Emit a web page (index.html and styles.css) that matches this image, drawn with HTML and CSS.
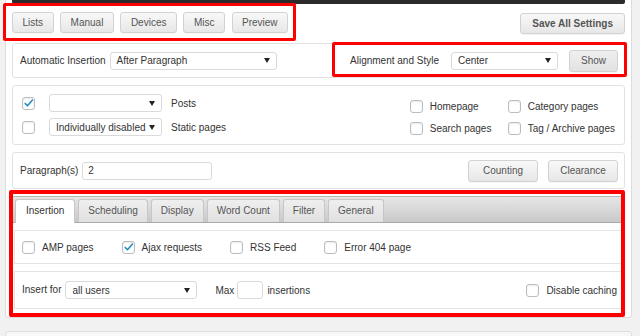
FILE: index.html
```html
<!DOCTYPE html>
<html>
<head>
<meta charset="utf-8">
<link rel="stylesheet" href="styles.css">
</head>
<body>
<div class="wrap">
  <div class="darkbar"></div>
  <div class="toolbar">
    <div class="btn-group">
      <button class="btn">Lists</button>
      <button class="btn">Manual</button>
      <button class="btn">Devices</button>
      <button class="btn">Misc</button>
      <button class="btn">Preview</button>
    </div>
    <button class="btn btn-save">Save All Settings</button>
  </div>

  <div class="panel panel-insertion">
    <div class="field">
      <span class="label">Automatic Insertion</span>
      <div class="select sel-auto"><span>After Paragraph</span><i class="arrow"></i></div>
    </div>
    <div class="field field-align">
      <span class="label">Alignment and Style</span>
      <div class="select sel-align"><span>Center</span><i class="arrow"></i></div>
      <button class="btn btn-show">Show</button>
    </div>
  </div>

  <div class="panel panel-pages">
    <div class="rows-left">
      <div class="row">
        <span class="cb"><svg viewBox="0 0 13 13" class="tick"><path d="M2.6 6.4 L5.3 9.2 L11.2 2.4"/></svg></span>
        <div class="select sel-small"><span></span><i class="arrow"></i></div>
        <span class="label">Posts</span>
      </div>
      <div class="row">
        <span class="cb"></span>
        <div class="select sel-small"><span>Individually disabled</span><i class="arrow"></i></div>
        <span class="label">Static pages</span>
      </div>
    </div>
    <div class="grid-right">
      <label class="check"><span class="cb"></span>Homepage</label>
      <label class="check"><span class="cb"></span>Category pages</label>
      <label class="check"><span class="cb"></span>Search pages</label>
      <label class="check"><span class="cb"></span>Tag / Archive pages</label>
    </div>
  </div>

  <div class="panel panel-para">
    <div class="field">
      <span class="label">Paragraph(s)</span>
      <div class="input in-para">2</div>
    </div>
    <div class="field field-btns">
      <button class="btn btn-wide">Counting</button>
      <button class="btn btn-wide">Clearance</button>
    </div>
  </div>

  <div class="tabs">
    <div class="tab-head">
      <span class="tab active">Insertion</span>
      <span class="tab">Scheduling</span>
      <span class="tab">Display</span>
      <span class="tab">Word Count</span>
      <span class="tab">Filter</span>
      <span class="tab">General</span>
    </div>
    <div class="tab-body">
      <div class="box box-checks">
        <label class="check"><span class="cb"></span>AMP pages</label>
        <label class="check"><span class="cb"><svg viewBox="0 0 13 13" class="tick"><path d="M2.6 6.4 L5.3 9.2 L11.2 2.4"/></svg></span>Ajax requests</label>
        <label class="check"><span class="cb"></span>RSS Feed</label>
        <label class="check"><span class="cb"></span>Error 404 page</label>
      </div>
      <div class="box box-insert">
        <div class="field">
          <span class="label label-up">Insert for</span>
          <div class="select sel-users"><span>all users</span><i class="arrow"></i></div>
          <span class="label label-max">Max</span>
          <div class="input in-max"></div>
          <span class="label">insertions</span>
        </div>
        <label class="check"><span class="cb"></span>Disable caching</label>
      </div>
    </div>
  </div>
</div>
<div class="next"></div>

<div class="mark mark-1"></div>
<div class="mark mark-2"></div>
<div class="mark mark-3"></div>
</body>
</html>
```

FILE: styles.css
```css
* { box-sizing: border-box; }
html, body { margin: 0; padding: 0; }
body {
  background: #f1f1f1;
  font-family: "Liberation Sans", Arial, sans-serif;
  font-size: 10px;
  color: #333;
  width: 640px;
  height: 336px;
  overflow: hidden;
  position: relative;
}
.wrap {
  margin-left: 5px;
  width: 627px;
  background: #fff;
  border: 1px solid #dcdcdc;
  border-top: none;
  border-radius: 0 0 4px 4px;
  padding: 0 6px 2px 6px;
}
.darkbar {
  height: 4px;
  background: #2b2b2b;
  border-radius: 0 0 2px 2px;
}
.toolbar {
  margin-top: 8px;
  display: flex;
  justify-content: space-between;
  align-items: flex-start;
}
.btn-group { display: flex; gap: 6.5px; }
.btn {
  font-family: inherit;
  font-size: 10px;
  color: #555;
  height: 21px;
  padding: 0 9.5px;
  background: linear-gradient(#f8f8f8, #e7e7e7);
  border: 1px solid #d2d2d2;
  border-radius: 3px;
  box-shadow: 0 1px 0 rgba(0,0,0,0.04);
  line-height: 19px;
  margin: 0;
}
.btn-save {
  font-weight: bold;
  height: 21px;
  margin-top: 1px;
  padding: 0 11px;
}
.panel {
  border: 1px solid #e2e2e2;
  border-radius: 3px;
  display: flex;
  justify-content: space-between;
}
.panel-insertion {
  margin-top: 9px;
  height: 35px;
  align-items: center;
  padding: 0 6px 0 7px;
}
.field { display: flex; align-items: center; }
.label { color: #333; white-space: nowrap; }
.select {
  display: flex;
  align-items: center;
  justify-content: space-between;
  height: 18px;
  border: 1px solid #dadada;
  border-radius: 3px;
  background: #fff;
  padding: 0 6px 0 6px;
  color: #333;
  white-space: nowrap;
}
.arrow {
  width: 0; height: 0;
  border-left: 3px solid transparent;
  border-right: 3px solid transparent;
  border-top: 5px solid #222;
  flex: none;
}
.sel-auto { width: 167px; margin-left: 4px; }
.field-align .sel-align { width: 107px; margin-left: 12px; height: 18px; }
.btn-show {
  margin-left: 11px;
  height: 22px;
  width: 49px;
  padding: 0;
  background: linear-gradient(#efefef, #e2e2e2);
}

.panel-pages {
  margin-top: 7px;
  height: 60px;
  padding: 8px 9px 0 9px;
  align-items: flex-start;
}
.rows-left { display: flex; flex-direction: column; gap: 6px; }
.row { display: flex; align-items: center; }
.row .cb { margin-right: 14px; }
.sel-small { width: 113px; padding-left: 6px; padding-right: 6px; }
.row .label { margin-left: 9px; }
.cb {
  display: block;
  width: 13px;
  height: 13px;
  border: 1px solid #b9bcc0;
  border-radius: 3px;
  background: #fff;
  box-shadow: inset 0 1px 2px rgba(0,0,0,0.08);
  flex: none;
}
.tick {
  display: block;
  width: 11px;
  height: 11px;
  overflow: visible;
}
.tick path {
  fill: none;
  stroke: #1e8cbe;
  stroke-width: 1.8;
  stroke-linecap: round;
  stroke-linejoin: round;
}
.grid-right {
  margin-top: 6px;
  display: grid;
  grid-template-columns: 98px auto;
  row-gap: 9px;
}
.check {
  display: flex;
  align-items: center;
  gap: 7px;
  white-space: nowrap;
  color: #333;
}

.panel-para {
  margin-top: 7px;
  height: 37px;
  align-items: center;
  padding: 0 6px 0 7px;
}
.input {
  height: 18px;
  border: 1px solid #dadada;
  border-radius: 3px;
  background: #fff;
  padding: 0 5px;
  line-height: 16px;
  color: #333;
}
.in-para { width: 130px; margin-left: 4px; }
.field-btns { gap: 10px; }
.btn-wide { width: 70px; padding: 0; height: 22px; }

.tabs { margin-top: 7px; }
.tab-head {
  height: 27px;
  border-top: 1px solid #b8b8b8;
  border-bottom: 1px solid #a9a9a9;
  background: linear-gradient(#e6e6e6, #c9c9c9);
  display: flex;
  align-items: flex-end;
  gap: 3px;
  padding-left: 3px;
}
.tab {
  height: 23px;
  padding: 0 9px;
  border: 1px solid #c6c6c6;
  border-bottom: none;
  border-radius: 3px 3px 0 0;
  background: linear-gradient(#efefef, #e0e0e0);
  color: #555;
  line-height: 22px;
  white-space: nowrap;
}
.tab.active {
  height: 24px;
  margin-bottom: -1px;
  padding: 0 10px;
  background: #fff;
  color: #333;
  border-color: #c6c6c6;
}
.tab-body { padding: 7px 3px 6px 2px; }
.box {
  border: 1px solid #e3e3e3;
  display: flex;
  align-items: center;
}
.box-checks {
  height: 34px;
  padding-left: 7px;
  gap: 28px;
}
.box-insert {
  margin-top: 7px;
  height: 38px;
  padding: 0 4px 0 7px;
  justify-content: space-between;
}
.label-up { margin-top: -2px; }
.sel-users { width: 132px; margin-left: 4px; }
.label-max { margin-left: 18px; }
.in-max { width: 26px; margin: 0 4px 0 3px; }

.next {
  margin: 13px 0 0 5px;
  width: 627px;
  height: 20px;
  border: 1px solid #dedede;
  border-radius: 3px;
  background: #f7f7f7;
}

.mark {
  position: absolute;
  border: 3px solid #ff0000;
  border-radius: 2px;
}
.mark-1 { left: 3px; top: 3px; width: 293px; height: 38px; }
.mark-2 { left: 332px; top: 42px; width: 295px; height: 35px; }
.mark-3 { left: 9px; top: 190px; width: 616px; height: 127px; border-width: 4px; }
```
